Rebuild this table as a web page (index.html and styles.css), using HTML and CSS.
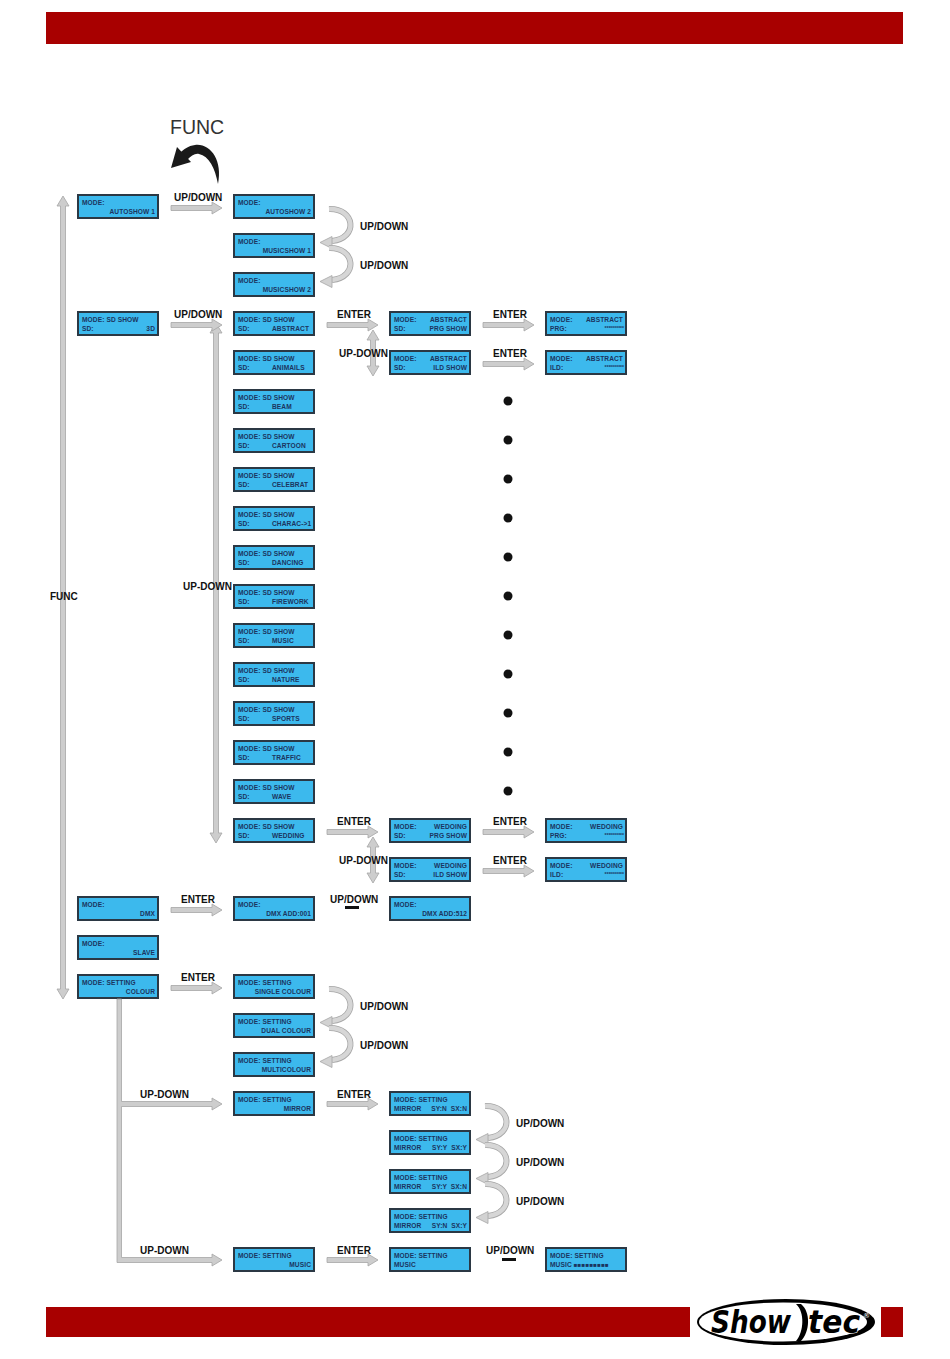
FILE: index.html
```html
<!DOCTYPE html>
<html>
<head>
<meta charset="utf-8">
<link rel="stylesheet" href="styles.css">
</head>
<body>
<div class="page">
  <div class="topbar"></div>
  <div class="diagram">
    <div class="grid">
      <div class="lcd" style="grid-area:1/1"><div class="ln"><span>MODE:</span></div><div class="ln r"><span>AUTOSHOW 1</span></div></div>
      <div class="lcd" style="grid-area:1/2"><div class="ln"><span>MODE:</span></div><div class="ln r"><span>AUTOSHOW 2</span></div></div>
      <div class="lcd" style="grid-area:2/2"><div class="ln"><span>MODE:</span></div><div class="ln r"><span>MUSICSHOW 1</span></div></div>
      <div class="lcd" style="grid-area:3/2"><div class="ln"><span>MODE:</span></div><div class="ln r"><span>MUSICSHOW 2</span></div></div>

      <div class="lcd" style="grid-area:4/1"><div class="ln"><span>MODE: SD SHOW</span></div><div class="ln"><span>SD:</span><span>3D</span></div></div>
      <div class="lcd" style="grid-area:4/2"><div class="ln"><span>MODE: SD SHOW</span></div><div class="ln sd"><span>SD:</span><span>ABSTRACT</span></div></div>
      <div class="lcd" style="grid-area:4/3"><div class="ln"><span>MODE:</span><span>ABSTRACT</span></div><div class="ln"><span>SD:</span><span>PRG SHOW</span></div></div>
      <div class="lcd" style="grid-area:4/4"><div class="ln"><span>MODE:</span><span>ABSTRACT</span></div><div class="ln"><span>PRG:</span><span class="stars">**********</span></div></div>

      <div class="lcd" style="grid-area:5/2"><div class="ln"><span>MODE: SD SHOW</span></div><div class="ln sd"><span>SD:</span><span>ANIMAILS</span></div></div>
      <div class="lcd" style="grid-area:5/3"><div class="ln"><span>MODE:</span><span>ABSTRACT</span></div><div class="ln"><span>SD:</span><span>ILD SHOW</span></div></div>
      <div class="lcd" style="grid-area:5/4"><div class="ln"><span>MODE:</span><span>ABSTRACT</span></div><div class="ln"><span>ILD:</span><span class="stars">**********</span></div></div>

      <div class="lcd" style="grid-area:6/2"><div class="ln"><span>MODE: SD SHOW</span></div><div class="ln sd"><span>SD:</span><span>BEAM</span></div></div>
      <div class="lcd" style="grid-area:7/2"><div class="ln"><span>MODE: SD SHOW</span></div><div class="ln sd"><span>SD:</span><span>CARTOON</span></div></div>
      <div class="lcd" style="grid-area:8/2"><div class="ln"><span>MODE: SD SHOW</span></div><div class="ln sd"><span>SD:</span><span>CELEBRAT</span></div></div>
      <div class="lcd" style="grid-area:9/2"><div class="ln"><span>MODE: SD SHOW</span></div><div class="ln sd"><span>SD:</span><span>CHARAC-&gt;1</span></div></div>
      <div class="lcd" style="grid-area:10/2"><div class="ln"><span>MODE: SD SHOW</span></div><div class="ln sd"><span>SD:</span><span>DANCING</span></div></div>
      <div class="lcd" style="grid-area:11/2"><div class="ln"><span>MODE: SD SHOW</span></div><div class="ln sd"><span>SD:</span><span>FIREWORK</span></div></div>
      <div class="lcd" style="grid-area:12/2"><div class="ln"><span>MODE: SD SHOW</span></div><div class="ln sd"><span>SD:</span><span>MUSIC</span></div></div>
      <div class="lcd" style="grid-area:13/2"><div class="ln"><span>MODE: SD SHOW</span></div><div class="ln sd"><span>SD:</span><span>NATURE</span></div></div>
      <div class="lcd" style="grid-area:14/2"><div class="ln"><span>MODE: SD SHOW</span></div><div class="ln sd"><span>SD:</span><span>SPORTS</span></div></div>
      <div class="lcd" style="grid-area:15/2"><div class="ln"><span>MODE: SD SHOW</span></div><div class="ln sd"><span>SD:</span><span>TRAFFIC</span></div></div>
      <div class="lcd" style="grid-area:16/2"><div class="ln"><span>MODE: SD SHOW</span></div><div class="ln sd"><span>SD:</span><span>WAVE</span></div></div>

      <div class="lcd" style="grid-area:17/2"><div class="ln"><span>MODE: SD SHOW</span></div><div class="ln sd"><span>SD:</span><span>WEDDING</span></div></div>
      <div class="lcd" style="grid-area:17/3"><div class="ln"><span>MODE:</span><span>WEDOING</span></div><div class="ln"><span>SD:</span><span>PRG SHOW</span></div></div>
      <div class="lcd" style="grid-area:17/4"><div class="ln"><span>MODE:</span><span>WEDOING</span></div><div class="ln"><span>PRG:</span><span class="stars">**********</span></div></div>
      <div class="lcd" style="grid-area:18/3"><div class="ln"><span>MODE:</span><span>WEDOING</span></div><div class="ln"><span>SD:</span><span>ILD SHOW</span></div></div>
      <div class="lcd" style="grid-area:18/4"><div class="ln"><span>MODE:</span><span>WEDOING</span></div><div class="ln"><span>ILD:</span><span class="stars">**********</span></div></div>

      <div class="lcd" style="grid-area:19/1"><div class="ln"><span>MODE:</span></div><div class="ln r"><span>DMX</span></div></div>
      <div class="lcd" style="grid-area:19/2"><div class="ln"><span>MODE:</span></div><div class="ln r"><span>DMX ADD:001</span></div></div>
      <div class="lcd" style="grid-area:19/3"><div class="ln"><span>MODE:</span></div><div class="ln r"><span>DMX ADD:512</span></div></div>

      <div class="lcd" style="grid-area:20/1"><div class="ln"><span>MODE:</span></div><div class="ln r"><span>SLAVE</span></div></div>

      <div class="lcd" style="grid-area:21/1"><div class="ln"><span>MODE: SETTING</span></div><div class="ln r"><span>COLOUR</span></div></div>
      <div class="lcd" style="grid-area:21/2"><div class="ln"><span>MODE: SETTING</span></div><div class="ln r"><span>SINGLE COLOUR</span></div></div>
      <div class="lcd" style="grid-area:22/2"><div class="ln"><span>MODE: SETTING</span></div><div class="ln r"><span>DUAL COLOUR</span></div></div>
      <div class="lcd" style="grid-area:23/2"><div class="ln"><span>MODE: SETTING</span></div><div class="ln r"><span>MULTICOLOUR</span></div></div>

      <div class="lcd" style="grid-area:24/2"><div class="ln"><span>MODE: SETTING</span></div><div class="ln r"><span>MIRROR</span></div></div>
      <div class="lcd" style="grid-area:24/3"><div class="ln"><span>MODE: SETTING</span></div><div class="ln"><span>MIRROR</span><span>SY:N&nbsp;&nbsp;SX:N</span></div></div>
      <div class="lcd" style="grid-area:25/3"><div class="ln"><span>MODE: SETTING</span></div><div class="ln"><span>MIRROR</span><span>SY:Y&nbsp;&nbsp;SX:Y</span></div></div>
      <div class="lcd" style="grid-area:26/3"><div class="ln"><span>MODE: SETTING</span></div><div class="ln"><span>MIRROR</span><span>SY:Y&nbsp;&nbsp;SX:N</span></div></div>
      <div class="lcd" style="grid-area:27/3"><div class="ln"><span>MODE: SETTING</span></div><div class="ln"><span>MIRROR</span><span>SY:N&nbsp;&nbsp;SX:Y</span></div></div>

      <div class="lcd" style="grid-area:28/2"><div class="ln"><span>MODE: SETTING</span></div><div class="ln r"><span>MUSIC</span></div></div>
      <div class="lcd" style="grid-area:28/3"><div class="ln"><span>MODE: SETTING</span></div><div class="ln"><span>MUSIC</span></div></div>
      <div class="lcd" style="grid-area:28/4"><div class="ln"><span>MODE: SETTING</span></div><div class="ln"><span>MUSIC <span class="sq">■■■■■■■■■</span></span></div></div>
    </div>

    <svg class="overlay" width="950" height="1254" viewBox="0 44 950 1254" xmlns="http://www.w3.org/2000/svg">
      <text class="func" x="170" y="134">FUNC</text>
      <path class="black" d="M218,184 C223,160 210,143 195,145 C188,146 184,149 180,153 L187,160 C191,156 195,153 199,154 C209,156 215,168 218,184 Z"/>
      <polygon class="black" points="171,168 177,147 191,162"/>

      <g class="arr">
        <polygon points="63,196 69,206 65.5,206 65.5,989 69,989 63,999 57,989 60.5,989 60.5,206 57,206"/>
        <polygon points="216,323 222,333 218.5,333 218.5,833 222,833 216,843 210,833 213.5,833 213.5,333 210,333"/>
        <polygon points="373,330 379,340 375.5,340 375.5,366 379,366 373,376 367,366 370.5,366 370.5,340 367,340"/>
        <polygon points="373,837 379,847 375.5,847 375.5,873 379,873 373,883 367,873 370.5,873 370.5,847 367,847"/>

        <polygon points="171,205.5 212,205.5 212,202 222,208 212,214 212,210.5 171,210.5"/>
        <polygon points="171,322.5 212,322.5 212,319 222,325 212,331 212,327.5 171,327.5"/>
        <polygon points="327,322.5 368,322.5 368,319 378,325 368,331 368,327.5 327,327.5"/>
        <polygon points="483,322.5 524,322.5 524,319 534,325 524,331 524,327.5 483,327.5"/>
        <polygon points="483,361.5 524,361.5 524,358 534,364 524,370 524,366.5 483,366.5"/>
        <polygon points="327,829.5 368,829.5 368,826 378,832 368,838 368,834.5 327,834.5"/>
        <polygon points="483,829.5 524,829.5 524,826 534,832 524,838 524,834.5 483,834.5"/>
        <polygon points="483,868.5 524,868.5 524,865 534,871 524,877 524,873.5 483,873.5"/>
        <polygon points="171,907.5 212,907.5 212,904 222,910 212,916 212,912.5 171,912.5"/>
        <polygon points="171,985.5 212,985.5 212,982 222,988 212,994 212,990.5 171,990.5"/>
        <polygon points="117,999 121.5,999 121.5,1101.5 212,1101.5 212,1098 222,1104 212,1110 212,1106.5 121.5,1106.5 121.5,1257.5 212,1257.5 212,1254 222,1260 212,1266 212,1262.5 117,1262.5"/>
        <polygon points="327,1101.5 368,1101.5 368,1098 378,1104 368,1110 368,1106.5 327,1106.5"/>
        <polygon points="327,1257.5 368,1257.5 368,1254 378,1260 368,1266 368,1262.5 327,1262.5"/>
      </g>

      <g class="curve">
        <path class="co" d="M329,209 C355,208 359,238 332,241"/><path class="ci" d="M329,209 C355,208 359,238 332,241"/>
        <polygon class="ch" points="320,242.5 332,236.5 332,248.5"/>
        <path class="co" d="M329,248 C355,247 359,277 332,280"/><path class="ci" d="M329,248 C355,247 359,277 332,280"/>
        <polygon class="ch" points="320,281.5 332,275.5 332,287.5"/>
        <path class="co" d="M329,989 C355,988 359,1018 332,1021"/><path class="ci" d="M329,989 C355,988 359,1018 332,1021"/>
        <polygon class="ch" points="320,1022.5 332,1016.5 332,1028.5"/>
        <path class="co" d="M329,1028 C355,1027 359,1057 332,1060"/><path class="ci" d="M329,1028 C355,1027 359,1057 332,1060"/>
        <polygon class="ch" points="320,1061.5 332,1055.5 332,1067.5"/>
        <path class="co" d="M485,1106 C511,1105 515,1135 488,1138"/><path class="ci" d="M485,1106 C511,1105 515,1135 488,1138"/>
        <polygon class="ch" points="476,1139.5 488,1133.5 488,1145.5"/>
        <path class="co" d="M485,1145 C511,1144 515,1174 488,1177"/><path class="ci" d="M485,1145 C511,1144 515,1174 488,1177"/>
        <polygon class="ch" points="476,1178.5 488,1172.5 488,1184.5"/>
        <path class="co" d="M485,1184 C511,1183 515,1213 488,1216"/><path class="ci" d="M485,1184 C511,1183 515,1213 488,1216"/>
        <polygon class="ch" points="476,1217.5 488,1211.5 488,1223.5"/>
      </g>

      <g class="dots">
        <circle cx="508" cy="401" r="4.5"/><circle cx="508" cy="440" r="4.5"/><circle cx="508" cy="479" r="4.5"/>
        <circle cx="508" cy="518" r="4.5"/><circle cx="508" cy="557" r="4.5"/><circle cx="508" cy="596" r="4.5"/>
        <circle cx="508" cy="635" r="4.5"/><circle cx="508" cy="674" r="4.5"/><circle cx="508" cy="713" r="4.5"/>
        <circle cx="508" cy="752" r="4.5"/><circle cx="508" cy="791" r="4.5"/>
        <rect x="345" y="906" width="14" height="3"/>
        <rect x="502" y="1258" width="14" height="3"/>
      </g>

      <g class="lbl">
        <text x="174" y="201">UP/DOWN</text>
        <text x="360" y="230">UP/DOWN</text>
        <text x="360" y="269">UP/DOWN</text>
        <text x="174" y="318">UP/DOWN</text>
        <text x="337" y="318">ENTER</text>
        <text x="493" y="318">ENTER</text>
        <text x="339" y="357">UP-DOWN</text>
        <text x="493" y="357">ENTER</text>
        <text x="183" y="590">UP-DOWN</text>
        <text x="50" y="600">FUNC</text>
        <text x="337" y="825">ENTER</text>
        <text x="493" y="825">ENTER</text>
        <text x="339" y="864">UP-DOWN</text>
        <text x="493" y="864">ENTER</text>
        <text x="181" y="903">ENTER</text>
        <text x="330" y="903">UP/DOWN</text>
        <text x="181" y="981">ENTER</text>
        <text x="360" y="1010">UP/DOWN</text>
        <text x="360" y="1049">UP/DOWN</text>
        <text x="140" y="1098">UP-DOWN</text>
        <text x="337" y="1098">ENTER</text>
        <text x="516" y="1127">UP/DOWN</text>
        <text x="516" y="1166">UP/DOWN</text>
        <text x="516" y="1205">UP/DOWN</text>
        <text x="140" y="1254">UP-DOWN</text>
        <text x="337" y="1254">ENTER</text>
        <text x="486" y="1254">UP/DOWN</text>
      </g>
    </svg>
  </div>

  <div class="footer">
    <div class="fbar"></div>
    <svg class="logo" width="190" height="48" viewBox="0 0 190 48" xmlns="http://www.w3.org/2000/svg">
      <ellipse cx="96" cy="24" rx="89" ry="23" fill="#000"/>
      <ellipse cx="93" cy="24" rx="84" ry="19.5" fill="#fff"/>
      <path d="M106,6 C115,14 114,34 106,43 L111,43 C120,34 121,14 111,6 Z" fill="#000"/>
      <text class="lg" x="21" y="35" textLength="80" lengthAdjust="spacingAndGlyphs">Show</text>
      <text class="lg lg2" x="118" y="35" textLength="52" lengthAdjust="spacingAndGlyphs">tec</text>
      <text class="reg" x="173" y="20">®</text>
    </svg>
    <div class="fblock"></div>
  </div>
</div>
</body>
</html>
```
FILE: styles.css
```css
html, body {
  margin: 0;
  padding: 0;
  background: #fff;
}
body {
  font-family: "Liberation Sans", Arial, sans-serif;
}
.page {
  width: 950px;
  height: 1359px;
  position: relative;
  overflow: hidden;
}
.topbar {
  margin: 12px 47px 0 46px;
  height: 32px;
  background: #a80000;
}
.diagram {
  position: relative;
  height: 1254px;
}
.grid {
  display: grid;
  grid-template-columns: repeat(4, 82px);
  column-gap: 74px;
  grid-auto-rows: 25px;
  row-gap: 14px;
  padding: 150px 0 0 77px;
}
.lcd {
  box-sizing: border-box;
  border: 2px solid #2b3844;
  background: #3cb9ed;
  padding: 1.5px 2px 0 3px;
  display: flex;
  flex-direction: column;
  color: #1b3560;
  font-family: "Liberation Sans", Arial, sans-serif;
  font-weight: bold;
  font-size: 6.6px;
  letter-spacing: 0.1px;
}
.ln {
  display: flex;
  justify-content: space-between;
  height: 9.5px;
  line-height: 9.5px;
  white-space: nowrap;
}
.ln.r {
  justify-content: flex-end;
}
.ln.sd {
  justify-content: flex-start;
}
.ln.sd span:first-child {
  width: 34px;
  flex: none;
}
.stars {
  font-size: 5px;
  letter-spacing: 0;
  margin-right: -1px;
}
.sq {
  letter-spacing: 0.3px;
  font-size: 6px;
}
.overlay {
  position: absolute;
  left: 0;
  top: 0;
  pointer-events: none;
}
.func {
  font-family: "Liberation Sans", Arial, sans-serif;
  font-size: 19.5px;
  fill: #333;
}
.black {
  fill: #1a1a1a;
}
.arr polygon {
  fill: #cdcdcd;
  stroke: #a6a6a6;
  stroke-width: 0.8;
}
.curve .co {
  fill: none;
  stroke: #a6a6a6;
  stroke-width: 6;
}
.curve .ci {
  fill: none;
  stroke: #d6d6d6;
  stroke-width: 4.4;
}
.curve .ch {
  fill: #d2d2d2;
  stroke: #a6a6a6;
  stroke-width: 0.8;
}
.dots circle, .dots rect {
  fill: #111;
}
.lbl text {
  font-family: "Liberation Sans", Arial, sans-serif;
  font-weight: bold;
  font-size: 10px;
  fill: #111;
}
.footer {
  display: flex;
  align-items: center;
  height: 48px;
  padding-left: 46px;
}
.fbar {
  width: 644px;
  height: 30px;
  background: #a80000;
}
.logo {
  display: block;
  flex: none;
}
.fblock {
  width: 22px;
  height: 30px;
  margin-left: 1px;
  background: #a80000;
}
.lg {
  font-family: "DejaVu Sans", sans-serif;
  font-weight: bold;
  font-style: italic;
  font-size: 32px;
  fill: #000;
}
.lg2 {
  stroke: #fff;
  stroke-width: 1.2;
  paint-order: stroke;
}
.reg {
  font-family: "DejaVu Sans", sans-serif;
  font-size: 7px;
  fill: #fff;
}
```
